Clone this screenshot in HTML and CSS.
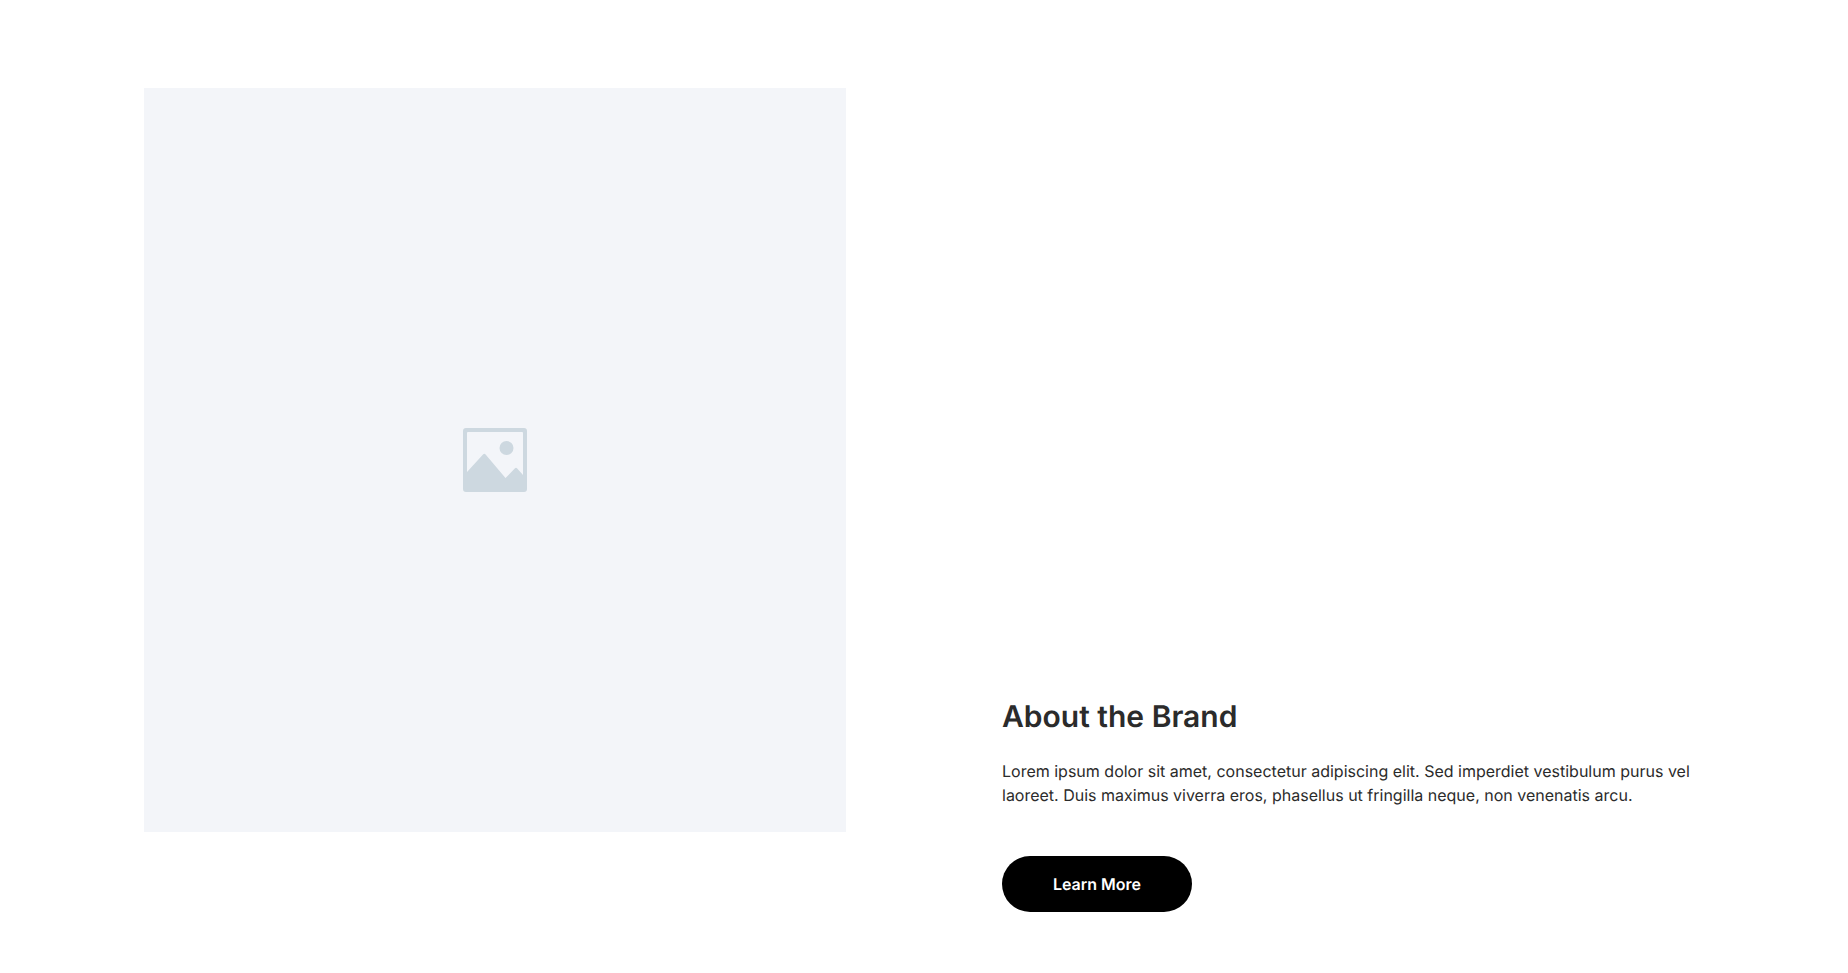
FILE: index.html
```html
<!DOCTYPE html>
<html lang="en">
<head>
<meta charset="utf-8">
<title>About the Brand</title>
<link rel="stylesheet" href="styles.css">
</head>
<body>
<section class="feature">
  <div class="media">
    <svg class="placeholder" viewBox="0 0 64 64" width="64" height="64" aria-hidden="true">
      <path class="glyph" fill-rule="evenodd" d="M3 0H61A3 3 0 0 1 64 3V61A3 3 0 0 1 61 64H3A3 3 0 0 1 0 61V3A3 3 0 0 1 3 0ZM5 4A1 1 0 0 0 4 5V44L20 26.500Q21.300 25 22.600 26.500L42.500 50L52 40.300Q53 39.300 54 40.300L60 47V5A1 1 0 0 0 59 4Z"/>
      <circle class="glyph" cx="43.500" cy="20" r="7"/>
    </svg>
  </div>
  <div class="content">
    <h2 class="title">About the Brand</h2>
    <p class="text">Lorem ipsum dolor sit amet, consectetur adipiscing elit. Sed imperdiet vestibulum purus vel laoreet. Duis maximus viverra eros, phasellus ut fringilla neque, non venenatis arcu.</p>
    <a class="button" href="#">Learn More</a>
  </div>
</section>
</body>
</html>
```
FILE: styles.css
```css
* {
  box-sizing: border-box;
}

html,
body {
  margin: 0;
  background: #fff;
}

body {
  font-family: Inter, "Liberation Sans", sans-serif;
  color: #2b2b2b;
  text-rendering: geometricPrecision;
}

.feature {
  display: grid;
  grid-template-columns: 702px 702px;
  column-gap: 156px;
  height: 973px;
  padding: 88px 144px 61px;
}

.media {
  display: flex;
  align-items: center;
  justify-content: center;
  height: 744px;
  background: #f3f5f9;
}

.placeholder {
  display: block;
}

.glyph {
  fill: #cdd8e0;
}

.content {
  display: flex;
  flex-direction: column;
  align-items: flex-start;
  justify-content: flex-end;
}

.title {
  margin: 0 0 24px;
  font-size: 30px;
  line-height: 36px;
  font-weight: 600;
}

.text {
  margin: 0 0 49px;
  font-size: 16px;
  line-height: 24px;
  font-weight: 400;
}

.button {
  display: flex;
  align-items: center;
  justify-content: center;
  width: 190px;
  height: 56px;
  border-radius: 28px;
  background: #000;
  color: #fff;
  font-size: 16px;
  font-weight: 600;
  text-decoration: none;
}
```
